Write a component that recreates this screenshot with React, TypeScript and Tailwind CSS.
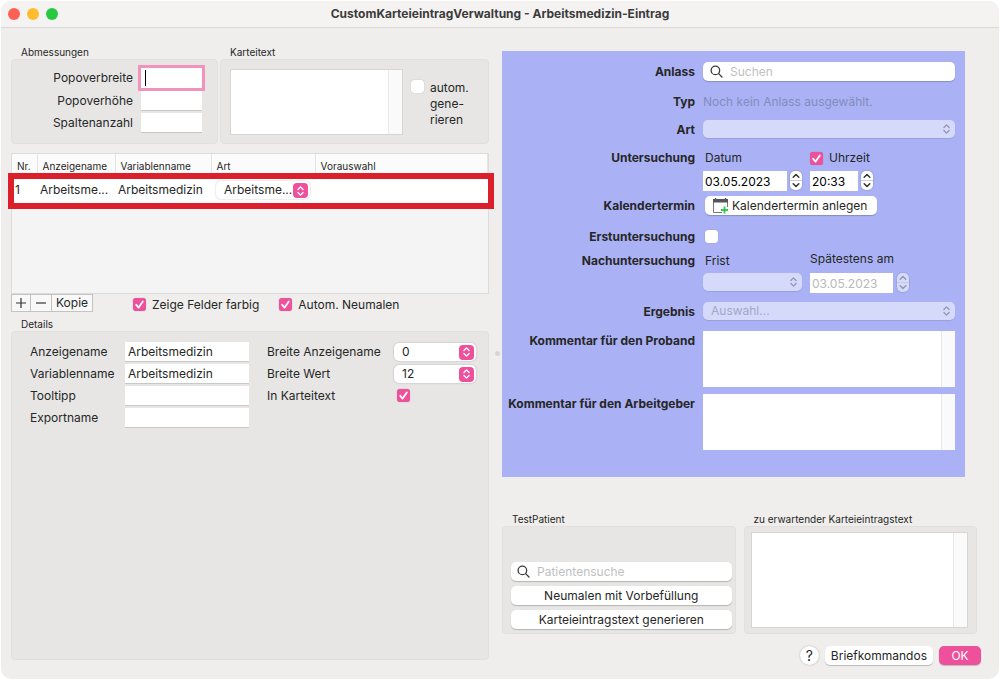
import { useState } from 'react'
import type { ReactNode } from 'react'

const COLUMNS = ['Nr.', 'Anzeigename', 'Variablenname', 'Art', 'Vorauswahl']

const DETAIL_FIELDS = [
  { id: 'anzeigename', label: 'Anzeigename', value: 'Arbeitsmedizin' },
  { id: 'variablenname', label: 'Variablenname', value: 'Arbeitsmedizin' },
  { id: 'tooltipp', label: 'Tooltipp', value: '' },
  { id: 'exportname', label: 'Exportname', value: '' },
]

const TEXT_INPUT = 'block h-[19px] bg-white px-[3px] outline-none shadow-[0_1px_0_#c9c8c7]'
const PUSH_BUTTON = 'h-[19px] rounded-[5px] bg-white leading-[19px] shadow-[0_1px_1px_rgba(0,0,0,0.22)]'

function UpDown({ className }: { className?: string }) {
  return (
    <svg viewBox="0 0 10 14" className={className} fill="none" stroke="currentColor" strokeWidth="1.6" strokeLinecap="round" strokeLinejoin="round">
      <path d="M2 5.2 5 2.2l3 3M2 8.8l3 3 3-3" />
    </svg>
  )
}

function SearchIcon() {
  return (
    <svg viewBox="0 0 14 14" className="h-[13px] w-[13px] shrink-0 text-[#3a3a3a]" fill="none" stroke="currentColor" strokeWidth="1.4" strokeLinecap="round">
      <circle cx="5.8" cy="5.8" r="4.6" />
      <path d="m9.3 9.3 3.6 3.6" />
    </svg>
  )
}

function CalendarIcon() {
  return (
    <svg viewBox="0 0 17 17" className="h-[17px] w-[17px] shrink-0" fill="none">
      <path d="M1.5 3v12.5H10M15.5 5v5" stroke="#777" strokeWidth="1" />
      <path d="M1 2h15v3.6H1z" fill="#555" />
      <path d="M3.5 1v2M13.5 1v2" stroke="#555" strokeWidth="1.4" />
      <path d="M12.5 9.5v7M9 13h7" stroke="#2fc94f" strokeWidth="1.8" />
    </svg>
  )
}

function Check({ id, checked = false }: { id: string; checked?: boolean }) {
  const [on, setOn] = useState(checked)
  return (
    <span className="relative block h-[13px] w-[13px] shrink-0">
      <input
        id={id}
        type="checkbox"
        checked={on}
        onChange={(e) => setOn(e.target.checked)}
        className="block h-[13px] w-[13px] appearance-none rounded-[3px] bg-white shadow-[0_0_1px_rgba(0,0,0,0.35)] checked:bg-[#ee509c]"
      />
      {on && (
        <svg viewBox="0 0 13 13" className="pointer-events-none absolute inset-0" fill="none" stroke="white" strokeWidth="1.8" strokeLinecap="round" strokeLinejoin="round">
          <path d="m3.2 6.8 2.4 2.8 4.2-6.2" />
        </svg>
      )}
    </span>
  )
}

function PinkSelect({ id, label, value, className }: { id?: string; label?: string; value: string; className: string }) {
  return (
    <div className={`relative ${className}`}>
      <select
        id={id}
        aria-label={label}
        defaultValue={value}
        className="block h-[18px] w-full appearance-none rounded-[5px] bg-white pl-2 leading-[18px] outline-none shadow-[0_0_2px_rgba(0,0,0,0.25)]"
      >
        <option>{value}</option>
      </select>
      <span className="pointer-events-none absolute right-[2px] top-[2px] flex h-[15px] w-[15px] items-center justify-center rounded-[4px] bg-[#ee509c] text-white">
        <UpDown className="h-3 w-[9px]" />
      </span>
    </div>
  )
}

function DisabledSelect({ id, value = '' }: { id: string; value?: string }) {
  return (
    <div className="relative w-full">
      <select
        id={id}
        disabled
        className="block h-[18px] w-full appearance-none rounded-[5px] bg-[#d5dafb] pl-2 leading-[18px] text-[#a3a7c6] opacity-100 shadow-[0_1px_1px_rgba(0,0,0,0.1)]"
      >
        <option>{value}</option>
      </select>
      <UpDown className="pointer-events-none absolute right-1 top-[3px] h-3 w-[9px] text-[#9397b5]" />
    </div>
  )
}

function Stepper({ label, disabled = false }: { label: string; disabled?: boolean }) {
  return (
    <button
      type="button"
      aria-label={label}
      disabled={disabled}
      className="h-[19px] w-3 shrink-0 rounded-[5px] bg-white text-[#333] shadow-[0_0_2px_rgba(0,0,0,0.25)] disabled:bg-[#d5dafb] disabled:text-[#9397b5]"
    >
      <svg viewBox="0 0 12 19" className="h-[19px] w-3" fill="none" stroke="currentColor" strokeWidth="1.5" strokeLinecap="round" strokeLinejoin="round">
        <path d="M3.2 6.2 6 3.5l2.8 2.7M3.2 12.8 6 15.5l2.8-2.7" />
        <path d="M0 9.5h12" strokeWidth="0.6" opacity="0.4" />
      </svg>
    </button>
  )
}

function ScrollText({ id, label, className }: { id?: string; label?: string; className: string }) {
  return (
    <div className={`flex bg-white ${className}`}>
      <textarea id={id} aria-label={label} className="min-w-0 flex-1 resize-none p-1 outline-none" />
      <div className="w-[14px] border-l border-[#e8e8e8] bg-[#fafafa]" />
    </div>
  )
}

function Group({ title, className = '', boxClass, children }: { title: string; className?: string; boxClass: string; children?: ReactNode }) {
  return (
    <section className={`flex flex-col ${className}`}>
      <h2 className="pl-[10px] text-[10px] leading-[14px]">{title}</h2>
      <div className={`rounded-[4px] border border-[#e1e0df] bg-[#e7e6e5] ${boxClass}`}>{children}</div>
    </section>
  )
}

function Row({ label, htmlFor, className, children }: { label?: string; htmlFor?: string; className: string; children: ReactNode }) {
  return (
    <div className={`grid grid-cols-[196px_minmax(0,1fr)] gap-x-[5px] ${className}`}>
      <label htmlFor={htmlFor} className="whitespace-nowrap pr-[3px] text-right font-bold leading-5">
        {label}
      </label>
      {children}
    </div>
  )
}

export default function App() {
  return (
    <div className="min-h-screen bg-white p-px font-['Inter','Liberation_Sans',sans-serif] text-xs text-[#262626]">
      <div className="flex min-h-[calc(100vh-2px)] flex-col overflow-hidden rounded-[10px] bg-[#efeeec]">
        {/* Title bar */}
        <header className="grid h-[27px] grid-cols-[1fr_auto_1fr] items-center border-b border-[#d9d8d7] bg-[#f4f3f2]">
          <div className="flex gap-[7px] pl-[7px]">
            <button type="button" aria-label="Schließen" className="h-3 w-3 rounded-full bg-[#fe5f57]" />
            <button type="button" aria-label="Minimieren" className="h-3 w-3 rounded-full bg-[#febc2e]" />
            <button type="button" aria-label="Zoomen" className="h-3 w-3 rounded-full bg-[#28c840]" />
          </div>
          <h1 className="font-bold text-[#3b3b3b]">CustomKarteieintragVerwaltung - Arbeitsmedizin-Eintrag</h1>
        </header>

        <main className="grid flex-1 grid-cols-[minmax(0,478fr)_13px_minmax(0,475fr)] pl-[10px] pr-[22px]">
          {/* Left side */}
          <div className="flex flex-col pb-[19px] pt-[17px]">
            <div className="flex gap-[2px]">
              <Group title="Abmessungen" className="w-[207px] shrink-0" boxClass="h-[85px] px-[15px] py-2">
                <div className="grid grid-cols-[1fr_auto] items-center gap-x-2 gap-y-[3px] text-right">
                  <label htmlFor="breite">Popoverbreite</label>
                  <div className="relative">
                    <input id="breite" className="block h-5 w-[61px] bg-white px-[3px] caret-transparent outline-[3px] outline-[#f093bd]" />
                    <span className="pointer-events-none absolute left-1 top-[2px] h-4 w-px bg-black" />
                  </div>
                  <label htmlFor="hoehe">Popoverhöhe</label>
                  <input id="hoehe" className={`w-[61px] ${TEXT_INPUT}`} />
                  <label htmlFor="spalten">Spaltenanzahl</label>
                  <input id="spalten" className={`w-[61px] ${TEXT_INPUT}`} />
                </div>
              </Group>
              <Group title="Karteitext" className="min-w-0 flex-1" boxClass="flex h-[85px] gap-2 py-[9px] pl-[9px] pr-2">
                <ScrollText label="Karteitext" className="h-[66px] min-w-0 flex-1 border border-[#d6d5d4]" />
                <div className="flex w-[69px] shrink-0 gap-[6px] pt-[11px]">
                  <Check id="autom" />
                  <label htmlFor="autom" className="leading-4">
                    autom.<br />gene-<br />rieren
                  </label>
                </div>
              </Group>
            </div>

            {/* Field list */}
            <div className="relative mt-[9px] h-[141px] border border-[#dddcdb] bg-[#f4f4f4]">
              <table className="w-full table-fixed border-collapse">
                <thead>
                  <tr className="h-[21px] bg-[#fbfbfb] text-left text-[10px]">
                    {COLUMNS.map((name) => (
                      <th key={name} className="border-r border-[#e4e4e4] pl-[5px] pt-1 font-normal first:w-[25px] last:w-auto nth-[2]:w-[78px] nth-[3]:w-24 nth-[4]:w-[104px]">
                        {name}
                      </th>
                    ))}
                  </tr>
                </thead>
                <tbody>
                  <tr className="h-[30px] bg-white">
                    <td className="pl-[3px]">1</td>
                    <td className="whitespace-nowrap pl-[3px]">Arbeitsme...</td>
                    <td className="whitespace-nowrap pl-[3px]">Arbeitsmedizin</td>
                    <td className="pl-[5px]">
                      <PinkSelect label="Art" value="Arbeitsme..." className="w-[94px]" />
                    </td>
                    <td />
                  </tr>
                </tbody>
              </table>
              <div className="pointer-events-none absolute -left-1 -right-[6px] top-[19px] h-9 border-[6px] border-[#dc202b]" />
            </div>

            <div className="flex h-[18px] items-center">
              <div className="flex h-[18px] divide-x divide-[#c4c3c2] border border-[#c4c3c2] bg-[#f8f8f8]">
                <button type="button" aria-label="Hinzufügen" className="flex w-[19px] items-center justify-center">
                  <svg viewBox="0 0 10 10" className="h-[10px] w-[10px]" stroke="#333" strokeWidth="1.2"><path d="M5 0v10M0 5h10" /></svg>
                </button>
                <button type="button" aria-label="Entfernen" className="flex w-[21px] items-center justify-center">
                  <svg viewBox="0 0 10 10" className="h-[10px] w-[10px]" stroke="#333" strokeWidth="1.2"><path d="M0 5h10" /></svg>
                </button>
                <button type="button" className="px-1 leading-4">Kopie</button>
              </div>
              <div className="ml-10 mt-[3px] flex items-center gap-[6px]">
                <Check id="farbig" checked />
                <label htmlFor="farbig">Zeige Felder farbig</label>
              </div>
              <div className="ml-5 mt-[3px] flex items-center gap-[6px]">
                <Check id="neumalen" checked />
                <label htmlFor="neumalen">Autom. Neumalen</label>
              </div>
            </div>

            <Group title="Details" className="mt-[5px] flex-1" boxClass="flex flex-1 items-start justify-between py-[10px] pl-[18px] pr-3">
              <div className="grid grid-cols-[95px_124px] items-center gap-y-[3px]">
                {DETAIL_FIELDS.map((field) => (
                  <div key={field.id} className="contents">
                    <label htmlFor={field.id}>{field.label}</label>
                    <input id={field.id} defaultValue={field.value} className={`w-full ${TEXT_INPUT}`} />
                  </div>
                ))}
              </div>
              <div className="grid grid-cols-[127px_82px] items-center gap-y-[3px]">
                <label htmlFor="breite-name" className="leading-[19px]">Breite Anzeigename</label>
                <PinkSelect id="breite-name" value="0" className="w-full" />
                <label htmlFor="breite-wert" className="leading-[19px]">Breite Wert</label>
                <PinkSelect id="breite-wert" value="12" className="w-full" />
                <label htmlFor="in-karteitext" className="leading-[19px]">In Karteitext</label>
                <div className="pl-[3px]"><Check id="in-karteitext" checked /></div>
              </div>
            </Group>
          </div>

          {/* Splitter grip */}
          <div className="flex items-center justify-end pr-[2px]">
            <span className="h-[5px] w-[5px] rounded-full bg-[#d6d5d4]" />
          </div>

          {/* Right side */}
          <div className="flex flex-col pt-[23px]">
            <form className="mr-3 bg-[#aab2f5] pb-[27px] pr-[10px] pt-[11px]">
              <Row label="Anlass" htmlFor="anlass" className="h-5">
                <div className="flex h-[19px] items-center gap-[7px] rounded-[5px] bg-white px-[7px] shadow-[0_1px_1px_rgba(0,0,0,0.2)]">
                  <SearchIcon />
                  <input id="anlass" placeholder="Suchen" className="min-w-0 flex-1 outline-none placeholder:text-[#bfbfbf]" />
                </div>
              </Row>
              <Row label="Typ" className="mt-[10px] h-5">
                <p className="leading-5 text-[#868bbd]">Noch kein Anlass ausgewählt.</p>
              </Row>
              <Row label="Art" htmlFor="art" className="mt-2 h-5">
                <DisabledSelect id="art" />
              </Row>
              <Row label="Untersuchung" htmlFor="datum" className="mt-2 h-5">
                <div className="flex gap-2 leading-5">
                  <label htmlFor="datum" className="w-[99px] pl-[2px]">Datum</label>
                  <span className="flex items-center gap-[6px]">
                    <Check id="uhrzeit" checked />
                    <label htmlFor="uhrzeit">Uhrzeit</label>
                  </span>
                </div>
              </Row>
              <Row className="mt-[3px] h-5">
                <div className="flex gap-2">
                  <div className="flex w-[99px] gap-[3px]">
                    <input id="datum" defaultValue="03.05.2023" className="h-5 w-[84px] bg-white px-[2px] text-black outline-none" />
                    <Stepper label="Datum ändern" />
                  </div>
                  <div className="flex gap-[3px]">
                    <input aria-label="Uhrzeit" defaultValue="20:33" className="h-5 w-12 bg-white px-[2px] text-black outline-none" />
                    <Stepper label="Uhrzeit ändern" />
                  </div>
                </div>
              </Row>
              <Row label="Kalendertermin" htmlFor="kalender" className="mt-[5px] h-5">
                <div className="pl-[2px]">
                  <button id="kalender" type="button" className={`flex items-center gap-[3px] pl-[7px] pr-[10px] ${PUSH_BUTTON}`}>
                    <CalendarIcon />
                    Kalendertermin anlegen
                  </button>
                </div>
              </Row>
              <Row label="Erstuntersuchung" htmlFor="erst" className="mt-[11px] h-5">
                <div className="pl-[2px] pt-[3px]"><Check id="erst" /></div>
              </Row>
              <Row label="Nachuntersuchung" htmlFor="frist" className="mt-1 h-5">
                <div className="flex gap-2">
                  <label htmlFor="frist" className="w-[99px] pl-[2px] leading-5">Frist</label>
                  <label htmlFor="spaetestens" className="leading-4">Spätestens am</label>
                </div>
              </Row>
              <Row className="mt-[2px] h-5">
                <div className="flex gap-2">
                  <div className="w-[99px]"><DisabledSelect id="frist" /></div>
                  <div className="flex gap-1">
                    <input id="spaetestens" disabled defaultValue="03.05.2023" className="h-5 w-[83px] bg-white px-[2px] text-[#b9b9b9]" />
                    <Stepper label="Frist ändern" disabled />
                  </div>
                </div>
              </Row>
              <Row label="Ergebnis" htmlFor="ergebnis" className="mt-[9px] h-5">
                <DisabledSelect id="ergebnis" value="Auswahl..." />
              </Row>
              <Row label="Kommentar für den Proband" htmlFor="proband" className="mt-[9px]">
                <ScrollText id="proband" className="h-14" />
              </Row>
              <Row label="Kommentar für den Arbeitgeber" htmlFor="arbeitgeber" className="mt-[7px]">
                <ScrollText id="arbeitgeber" className="h-14" />
              </Row>
            </form>

            <div className="mt-[35px] flex gap-2">
              <Group title="TestPatient" className="min-w-0 flex-1" boxClass="flex h-[108px] flex-col justify-end gap-[5px] pb-1 pl-2 pr-[3px]">
                <div className="flex h-[19px] items-center gap-[7px] rounded-[5px] bg-white px-[6px] shadow-[0_1px_1px_rgba(0,0,0,0.22)]">
                  <SearchIcon />
                  <input aria-label="Patientensuche" placeholder="Patientensuche" className="min-w-0 flex-1 outline-none placeholder:text-[#bfbfbf]" />
                </div>
                <button type="button" className={PUSH_BUTTON}>Neumalen mit Vorbefüllung</button>
                <button type="button" className={PUSH_BUTTON}>Karteieintragstext generieren</button>
              </Group>
              <Group title="zu erwartender Karteieintragstext" className="min-w-0 flex-1" boxClass="h-[108px] py-[5px] pl-[6px] pr-2">
                <ScrollText label="zu erwartender Karteieintragstext" className="h-24 border border-[#d6d5d4]" />
              </Group>
            </div>

            <footer className="-mr-1 mt-3 flex items-center justify-end gap-[6px]">
              <button type="button" className="h-[19px] w-[19px] rounded-full bg-white text-sm leading-[19px] shadow-[0_0_2px_rgba(0,0,0,0.3)]">?</button>
              <button type="button" className={`px-[6px] ${PUSH_BUTTON}`}>Briefkommandos</button>
              <button type="button" className="h-[19px] w-[42px] rounded-[5px] bg-[#ee509c] leading-[19px] text-white shadow-[0_1px_1px_rgba(0,0,0,0.22)]">OK</button>
            </footer>
          </div>
        </main>
      </div>
    </div>
  )
}
